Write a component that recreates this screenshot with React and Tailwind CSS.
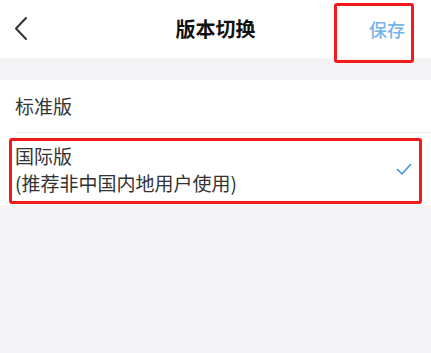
const FONT = { fontFamily: '"Noto Sans CJK SC", "Liberation Sans", sans-serif' }

export default function App() {
    return (
        <div className="w-[431px] h-[353px] bg-[#f4f4f7] flex flex-col overflow-hidden" style={FONT}>
            {/* Header */}
            <div className="h-[58px] bg-white flex items-center relative shrink-0">
                <div className="w-[80px] pl-[11px] flex items-center">
                    <svg width="22" height="26" viewBox="0 0 22 26" fill="none">
                        <path d="M15 2 L5 12.5 L15 23" stroke="#333" strokeWidth="2" strokeLinecap="round" strokeLinejoin="round" />
                    </svg>
                </div>
                <h1 className="flex-1 text-center text-[20px] font-bold text-[#111] leading-none">版本切换</h1>
                <div className="w-[80px] flex justify-end pr-[26px]">
                    <span className="text-[18px] font-medium text-[#74b4ea] leading-none whitespace-nowrap">保存</span>
                </div>
                <div className="absolute left-[334px] top-[3px] w-[80px] h-[60px] border-[3px] border-[#f21a1a] rounded-[3px] z-10" />
            </div>

            <div className="h-[22px] shrink-0" />

            {/* List */}
            <div className="bg-white">
                <div className="ml-[15px] h-[53px] flex items-center border-b border-[#ececf0]">
                    <span className="text-[19px] text-[#333]">标准版</span>
                </div>
                <div className="h-[72px] flex items-center justify-between pl-[15px] pr-[19px] relative">
                    <div className="flex flex-col text-[19px] text-[#333] leading-[27px]">
                        <span>国际版</span>
                        <span>(推荐非中国内地用户使用)</span>
                    </div>
                    <svg width="16" height="13" viewBox="0 0 16 13" fill="none">
                        <path d="M1.5 6.5 L6 11 L14.5 1.5" stroke="#3d94e0" strokeWidth="1.6" strokeLinecap="round" strokeLinejoin="round" />
                    </svg>
                    <div className="absolute left-[9px] right-[9px] top-[5px] bottom-[1px] border-[3px] border-[#f21a1a] rounded-[3px]" />
                </div>
            </div>
        </div>
    )
}
